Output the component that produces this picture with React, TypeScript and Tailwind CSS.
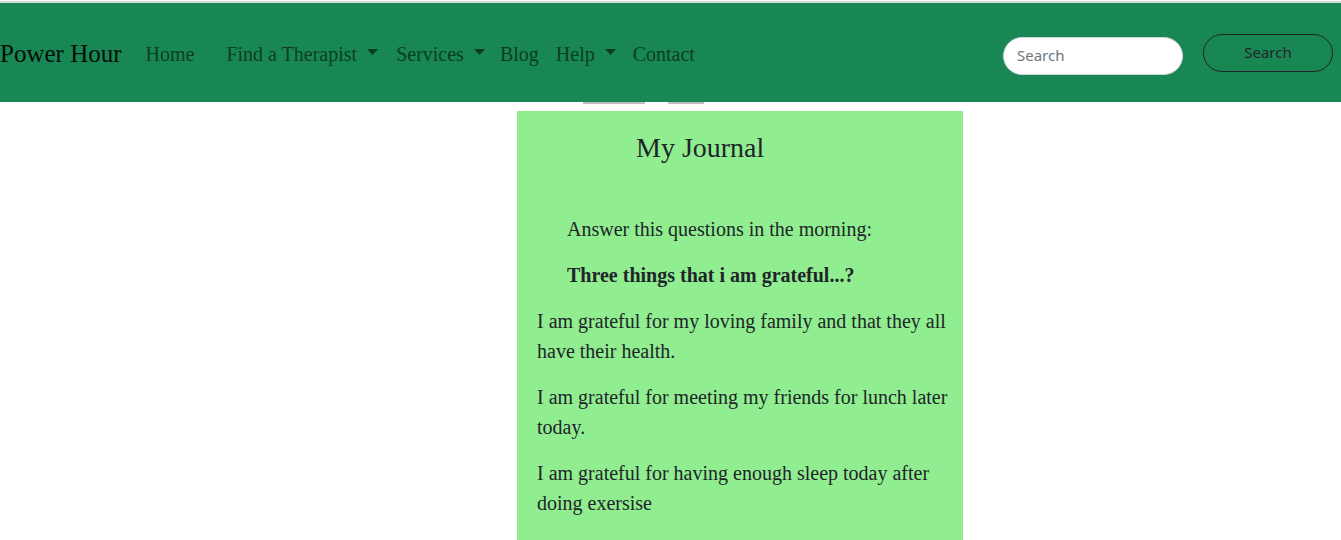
import React from "react";

const serif = { fontFamily: '"Liberation Serif", "Times New Roman", serif' };

function Caret() {
  return (
    <svg width="11" height="6" viewBox="0 0 11 6" className="ml-[10px] mt-[-3px]">
      <polygon points="0,0 11,0 5.5,6" fill="#0b3d26" />
    </svg>
  );
}

export default function App() {
  return (
    <div className="min-h-[540px] bg-white" style={serif}>
      <div className="h-[1px] bg-white" />
      <div className="h-[2px] bg-[#d9d9d9]" />
      <nav className="relative flex items-center h-[99px] bg-[#198754]">
        <span className="mt-[2px] text-[25px] leading-none text-[#030e08]">Power Hour</span>
        <div className="mt-[2px] flex items-center text-[20px] leading-none text-[#0b3d26]">
          <span className="ml-[24px]">Home</span>
          <span className="ml-[32px]">Find a Therapist</span>
          <Caret />
          <span className="ml-[18px]">Services</span>
          <Caret />
          <span className="ml-[15px]">Blog</span>
          <span className="ml-[17px]">Help</span>
          <Caret />
          <span className="ml-[17px]">Contact</span>
        </div>
        <div className="ml-auto flex items-center" style={{ fontFamily: '"Noto Sans", "Open Sans", sans-serif' }}>
          <div className="mt-[6px] w-[180px] h-[38px] rounded-full bg-white border border-[#ced4da] flex items-center pl-[13px] text-[15px] text-[#6c757d]">
            Search
          </div>
          <div className="ml-[20px] mr-[8px] w-[130px] h-[38px] rounded-full border border-[#212529] flex items-center justify-center text-[15px] text-[#212529]">
            Search
          </div>
        </div>
        <div className="absolute top-full left-[583px] w-[62px] h-[2px] bg-[#bdbdbd] blur-[0.5px]" />
        <div className="absolute top-full left-[668px] w-[36px] h-[2px] bg-[#bdbdbd] blur-[0.5px]" />
      </nav>
      <div className="ml-[517px] mt-[9px] w-[446px] bg-[#90ee90] pt-[20px] pb-[30px] pl-[20px] pr-[10px] text-[#212529]">
        <h3 className="ml-[99px] text-[28px] leading-[34px]">My Journal</h3>
        <p className="ml-[30px] mt-[49px] text-[20px] leading-[30px]">Answer this questions in the morning:</p>
        <p className="ml-[30px] mt-[16px] text-[20px] leading-[30px] font-bold">Three things that i am grateful...?</p>
        <p className="mt-[16px] text-[20px] leading-[30px]">I am grateful for my loving family and that they all have their health.</p>
        <p className="mt-[16px] text-[20px] leading-[30px]">I am grateful for meeting my friends for lunch later today.</p>
        <p className="mt-[16px] text-[20px] leading-[30px]">I am grateful for having enough sleep today after doing exersise</p>
      </div>
    </div>
  );
}
